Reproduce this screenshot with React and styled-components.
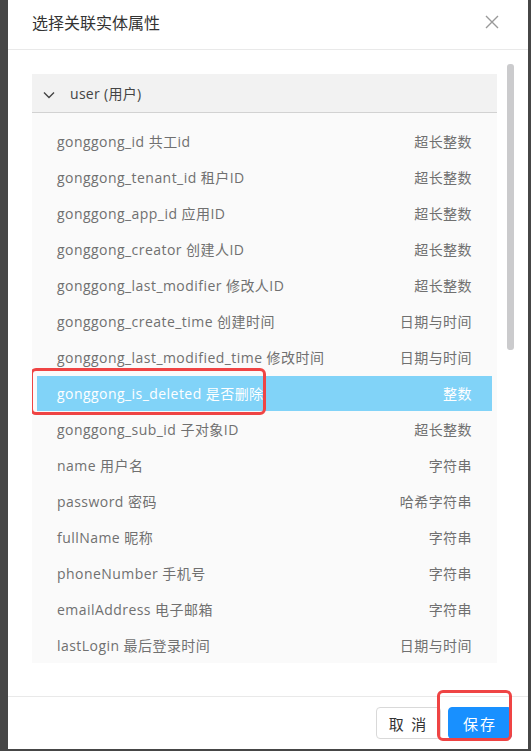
import React from "react"
import styled, { createGlobalStyle } from "styled-components"

const fields = [
    { name: "gonggong_id 共工id", type: "超长整数" },
    { name: "gonggong_tenant_id 租户ID", type: "超长整数" },
    { name: "gonggong_app_id 应用ID", type: "超长整数" },
    { name: "gonggong_creator 创建人ID", type: "超长整数" },
    { name: "gonggong_last_modifier 修改人ID", type: "超长整数" },
    { name: "gonggong_create_time 创建时间", type: "日期与时间" },
    { name: "gonggong_last_modified_time 修改时间", type: "日期与时间" },
    { name: "gonggong_is_deleted 是否删除", type: "整数", active: true },
    { name: "gonggong_sub_id 子对象ID", type: "超长整数" },
    { name: "name 用户名", type: "字符串" },
    { name: "password 密码", type: "哈希字符串" },
    { name: "fullName 昵称", type: "字符串" },
    { name: "phoneNumber 手机号", type: "字符串" },
    { name: "emailAddress 电子邮箱", type: "字符串" },
    { name: "lastLogin 最后登录时间", type: "日期与时间" },
]

const App = () => {
    return (
        <Page>
            <GlobalStyle />
            <Dialog>
                <Header>
                    <Title>选择关联实体属性</Title>
                    <Close>
                        <svg width="14" height="14" viewBox="0 0 14 14">
                            <path d="M1 1L13 13M13 1L1 13" stroke="#999" strokeWidth="1.4" />
                        </svg>
                    </Close>
                </Header>
                <Body>
                    <Panel>
                        <GroupHead>
                            <svg width="12" height="8" viewBox="0 0 12 8">
                                <path d="M1 1.5L6 6.5L11 1.5" fill="none" stroke="#444" strokeWidth="1.4" />
                            </svg>
                            <GroupName>user (用户)</GroupName>
                        </GroupHead>
                        <Rows>
                            { fields.map((f) => (
                                <Row key={ f.name } active={ f.active }>
                                    <span>{ f.name }</span>
                                    <span>{ f.type }</span>
                                    { f.active && <Mark /> }
                                </Row>
                            )) }
                        </Rows>
                    </Panel>
                    <Thumb />
                </Body>
                <Footer>
                    <Button>取 消</Button>
                    <SaveWrap>
                        <Button primary>保存</Button>
                        <SaveMark />
                    </SaveWrap>
                </Footer>
            </Dialog>
        </Page>
    )
}

const GlobalStyle = createGlobalStyle`
    body {
        margin: 0;
        font-family: "Open Sans", "Noto Sans CJK SC", sans-serif;
    }
`

const Page = styled.div`
    background: #464646;
    height: 751px;
    padding-left: 8px;
    box-sizing: border-box;
`

const Dialog = styled.div`
    width: 520px;
    height: 749px;
    background: #fff;
    display: flex;
    flex-direction: column;
`

const Header = styled.div`
    height: 49px;
    border-bottom: 1px solid #e9e9e9;
    padding: 0 29px 0 24px;
    display: flex;
    align-items: center;
    justify-content: space-between;
`

const Title = styled.div`
    font-size: 16px;
    color: #333;
    margin-top: -5px;
`

const Close = styled.div`
    display: flex;
    margin-top: -5px;
`

const Body = styled.div`
    height: 646px;
    padding: 14px 0 0 24px;
    box-sizing: border-box;
    display: flex;
    align-items: flex-start;
`

const Panel = styled.div`
    width: 465px;
    height: 589px;
    margin-top: 10px;
    background: #fafafa;
    overflow: hidden;
`

const GroupHead = styled.div`
    height: 38px;
    background: #f2f2f2;
    border-bottom: 1px solid #d2d2d2;
    display: flex;
    align-items: center;
    padding-left: 11px;
    svg {
        margin-top: 3px;
    }
`

const GroupName = styled.span`
    margin-left: 15px;
    font-size: 14px;
    letter-spacing: 0.3px;
    color: #444;
`

const Rows = styled.div`
    padding: 11px 5px 0;
`

const Row = styled.div`
    position: relative;
    height: 35px;
    margin-bottom: 1px;
    display: flex;
    align-items: center;
    justify-content: space-between;
    padding: 0 20px;
    font-size: 14px;
    letter-spacing: 0.45px;
    line-height: 1;
    white-space: nowrap;
    color: ${ (p) => (p.active ? "#fff" : "#707070") };
    background: ${ (p) => (p.active ? "#81d3f8" : "transparent") };
`

const Mark = styled.div`
    position: absolute;
    left: -7px;
    top: -8px;
    width: 236px;
    height: 47px;
    border: 3px solid #ef4444;
    border-radius: 6px;
    box-sizing: border-box;
`

const Thumb = styled.div`
    width: 7px;
    height: 286px;
    margin-left: 10px;
    background: #cbcbcd;
    border-radius: 3px;
`

const Footer = styled.div`
    flex: 1;
    border-top: 1px solid #e9e9e9;
    display: flex;
    justify-content: flex-end;
    align-items: flex-start;
    gap: 7px;
    padding: 10px 16px 0;
`

const SaveWrap = styled.div`
    position: relative;
`

const SaveMark = styled.div`
    position: absolute;
    left: -11px;
    top: -17px;
    width: 75px;
    height: 51px;
    border: 3px solid #ef4444;
    border-radius: 6px;
    box-sizing: border-box;
`

const Button = styled.button`
    height: 32px;
    width: ${ (p) => (p.primary ? "64px" : "65px") };
    border-radius: 4px;
    font-family: "Noto Sans CJK SC", sans-serif;
    font-size: 15px;
    letter-spacing: 2px;
    border: 1px solid ${ (p) => (p.primary ? "#1890ff" : "#d9d9d9") };
    background: ${ (p) => (p.primary ? "#1890ff" : "#fff") };
    color: ${ (p) => (p.primary ? "#fff" : "#333") };
`

export default App
